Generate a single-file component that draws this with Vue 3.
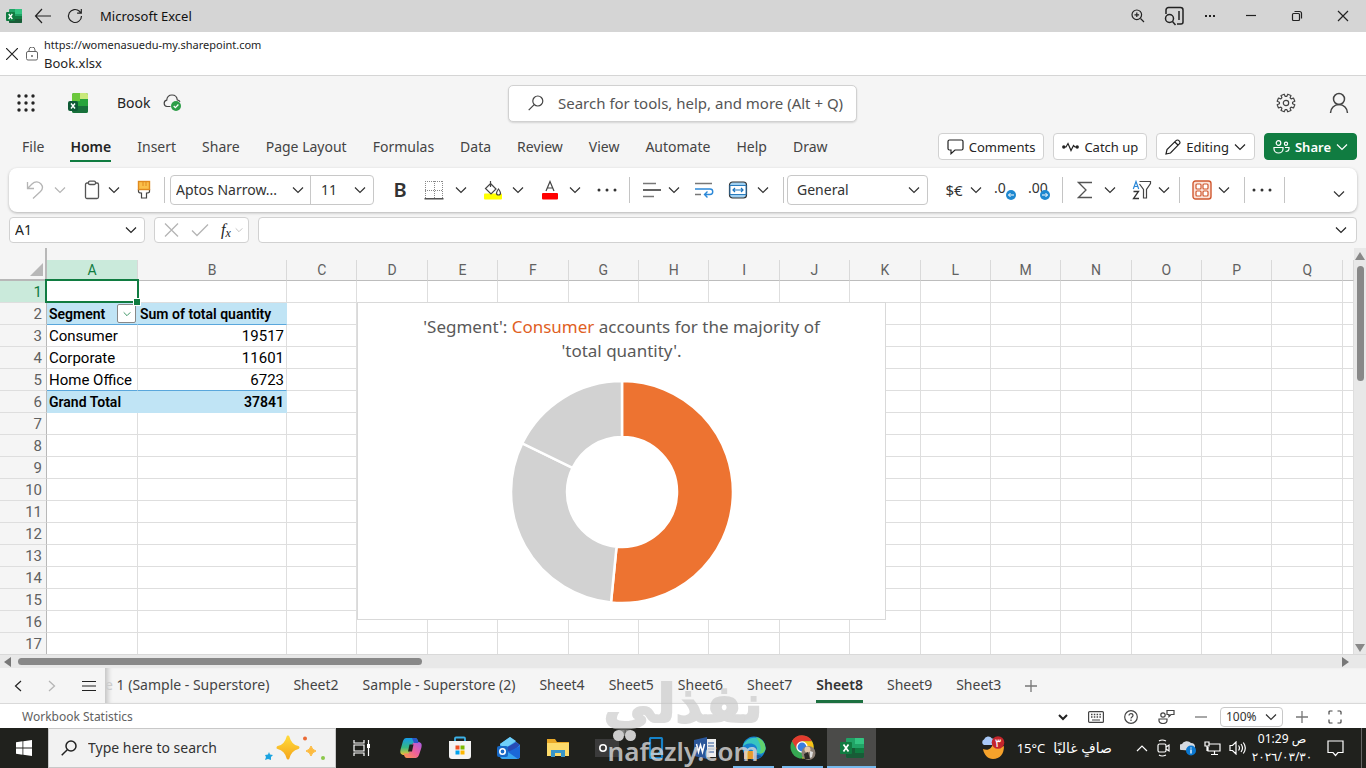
<script setup>
import { h } from 'vue'

const Chev = () =>
  h('svg', { class: 'chev', viewBox: '0 0 12 12', width: 12, height: 12, 'aria-hidden': 'true' }, [
    h('path', { d: 'M1 3.5l5 5 5-5', fill: 'none', stroke: 'currentColor', 'stroke-width': 1.2 })
  ])

const menus = ['File', 'Home', 'Insert', 'Share', 'Page Layout', 'Formulas', 'Data', 'Review', 'View', 'Automate', 'Help', 'Draw']
const columns = 'ABCDEFGHIJKLMNOPQ'.split('')
const cells = {
  2: ['Segment', 'Sum of total quantity'],
  3: ['Consumer', '19517'],
  4: ['Corporate', '11601'],
  5: ['Home Office', '6723'],
  6: ['Grand Total', '37841']
}
const sheets = ['Sheet2', 'Sample - Superstore (2)', 'Sheet4', 'Sheet5', 'Sheet6', 'Sheet7', 'Sheet8', 'Sheet9', 'Sheet3']

const parts = [
  { name: 'Consumer', value: 19517, color: '#ed7331' },
  { name: 'Corporate', value: 11601, color: '#d2d2d2' },
  { name: 'Home Office', value: 6723, color: '#d2d2d2' }
]
const total = parts.reduce((s, p) => s + p.value, 0)
let run = 0
const point = (r, t) => `${(112 + r * Math.sin(t)).toFixed(2)} ${(112 - r * Math.cos(t)).toFixed(2)}`
const slices = parts.map((p) => {
  const a = (run / total) * Math.PI * 2
  run += p.value
  const b = (run / total) * Math.PI * 2
  const big = b - a > Math.PI ? 1 : 0
  return {
    ...p,
    d: `M${point(111, a)}A111 111 0 ${big} 1 ${point(111, b)}L${point(55, b)}A55 55 0 ${big} 0 ${point(55, a)}Z`
  }
})

// Eight-tooth gear outline around (10, 10)
const gear = Array.from({ length: 8 }, (_, i) =>
  [[-16, 6.6], [-11, 9], [11, 9], [16, 6.6]].map(([deg, r]) => {
    const t = ((i * 45 + 22.5 + deg) * Math.PI) / 180
    return `${(10 + r * Math.cos(t)).toFixed(2)},${(10 + r * Math.sin(t)).toFixed(2)}`
  }).join(' ')
).join(' ')
</script>

<template>
  <div class="window">
    <header class="titlebar">
      <svg class="t-logo" width="16" height="16" viewBox="0 0 16 16"><rect x="3" y="1" width="13" height="14" rx="1" fill="#21a366" /><path d="M9 1h6a1 1 0 0 1 1 1v4H9z" fill="#33c481" /><path d="M3 8h13v6a1 1 0 0 1-1 1H4a1 1 0 0 1-1-1z" fill="#185c37" /><path d="M9 8h7v3H9z" fill="#107c41" /><rect y="4" width="9" height="9" rx="1" fill="#107c41" /><path d="M2.700 6l3.600 5M6.300 6l-3.600 5" stroke="#fff" stroke-width="1.300" /></svg>
      <button aria-label="Back" class="back"><svg width="18" height="16" viewBox="0 0 18 16"><path d="M8 1L1.500 8 8 15M1.500 8H17" class="ln" /></svg></button>
      <button aria-label="Reload" class="reload"><svg width="16" height="16" viewBox="0 0 16 16"><path d="M14.500 8A6.500 6.500 0 1 1 12.500 3.300L14 5M14.300 1v4.200h-4.200" class="ln" /></svg></button>
      <span class="title">Microsoft Excel</span>
      <div class="win-tools">
        <button aria-label="Zoom"><svg width="14" height="14" viewBox="0 0 14 14"><circle cx="5.800" cy="5.800" r="4.800" class="ln" /><path d="M9.500 9.500L13 13M3.500 5.800h4.600M5.800 3.500v4.600" class="ln" /></svg></button>
        <button aria-label="Search in sidebar"><svg width="20" height="20" viewBox="0 0 20 20"><path d="M2 8V4a2.500 2.500 0 0 1 2.500-2.500h12A2.500 2.500 0 0 1 19 4v12a2 2 0 0 1-2 2h-4M15 5v9" class="ln w15" /><circle cx="5.500" cy="12.500" r="4" class="ln w15" /><path d="M8.500 15.500l3 3.500" class="ln w15" /></svg></button>
        <button aria-label="More"><svg width="12" height="4" viewBox="0 0 12 4"><path d="M1 1h2v2H1zM5 1h2v2H5zM9 1h2v2H9z" fill="#222" /></svg></button>
        <button aria-label="Minimize"><svg width="12" height="12" viewBox="0 0 12 12"><path d="M1 5.500h10" class="ln" /></svg></button>
        <button aria-label="Restore"><svg width="12" height="12" viewBox="0 0 12 12"><rect x="1.500" y="3.500" width="7" height="7" rx="1" class="ln" /><path d="M3.500 1.500h5a2 2 0 0 1 2 2v5" class="ln" /></svg></button>
        <button aria-label="Close"><svg width="12" height="12" viewBox="0 0 12 12"><path d="M1 1l10 10M11 1L1 11" class="ln" /></svg></button>
      </div>
    </header>

    <div class="address">
      <button aria-label="Close page"><svg width="12" height="12" viewBox="0 0 12 12"><path d="M0 0l12 12M12 0L0 12" class="ln" /></svg></button>
      <svg class="lock" width="12" height="14" viewBox="0 0 12 14"><g fill="none" stroke="#666"><rect x=".5" y="4.500" width="11" height="8.500" rx="1.500" /><path d="M3 4.500V3a3 3 0 0 1 6 0v1.500" /></g><circle cx="6" cy="9" r=".9" fill="#555" /></svg>
      <div class="url"><div>https://womenasuedu-my.sharepoint.com</div><div class="file">Book.xlsx</div></div>
    </div>

    <div class="suite">
      <div class="suite-left">
        <button aria-label="App launcher"><svg width="20" height="18" viewBox="0 0 20 18" fill="#242424"><g v-for="y in 3" :key="y"><circle v-for="x in 3" :key="x" :cx="x * 7 - 4" :cy="y * 7 - 5" r="1.700" /></g></svg></button>
        <svg class="x-logo" width="20" height="20" viewBox="0 0 20 20"><rect x="4" width="16" height="20" rx="2" fill="#27a43c" /><path d="M4 2a2 2 0 0 1 2-2h6v8H4z" fill="#6cc83c" /><path d="M12 0h6a2 2 0 0 1 2 2v4h-8z" fill="#c9e97a" /><path d="M4 13h16v5a2 2 0 0 1-2 2H6a2 2 0 0 1-2-2z" fill="#17703a" /><rect y="8" width="10" height="10" rx="2" fill="#0e5a35" /><path d="M3 10.500l4 5M7 10.500l-4 5" stroke="#fff" stroke-width="1.400" /></svg>
        <span class="book">Book</span>
        <svg class="cloud" width="19" height="18" viewBox="0 0 19 18"><path d="M7.500 12.500H4a3.200 3.200 0 0 1-.3-6.300C4 3.200 6 1 9 1s5 2 5.300 5A3.200 3.200 0 0 1 17 7.800" fill="none" stroke="#444" stroke-width="1.200" /><circle cx="13" cy="12" r="5" fill="#2e9e48" /><path d="M10.700 12l1.700 1.700 3-3.200" fill="none" stroke="#fff" stroke-width="1.200" /></svg>
      </div>
      <label class="search"><svg width="16" height="16" viewBox="0 0 16 16"><circle cx="9.800" cy="6" r="5" class="ln g" /><path d="M6.200 9.600L.7 15.200" class="ln g" /></svg><input aria-label="Search" placeholder="Search for tools, help, and more (Alt + Q)" /></label>
      <div class="suite-right">
        <button aria-label="Settings"><svg width="20" height="20" viewBox="0 0 20 20"><polygon :points="gear" class="ln g" stroke-linejoin="round" /><circle cx="10" cy="10" r="2.700" class="ln g" /></svg></button>
        <button aria-label="Account"><svg width="20" height="22" viewBox="0 0 20 22"><circle cx="10" cy="7" r="5.500" class="ln g w15" /><path d="M1.500 21a8.500 8.500 0 0 1 17 0" class="ln g w15" /></svg></button>
      </div>
    </div>

    <div class="menu-row">
      <nav class="menus"><a v-for="m in menus" :key="m" href="#" :class="{ on: m === 'Home' }">{{ m }}</a></nav>
      <div class="actions">
        <button><svg width="17" height="16" viewBox="0 0 17 16"><path d="M2.500 1h12A1.500 1.500 0 0 1 16 2.500v7a1.500 1.500 0 0 1-1.500 1.500H8l-4 3.700V11H2.500A1.500 1.500 0 0 1 1 9.500v-7A1.500 1.500 0 0 1 2.500 1z" class="ln" /></svg>Comments</button>
        <button><svg width="17" height="12" viewBox="0 0 17 12"><circle cx="1.800" cy="6" r="1.700" fill="#222" /><circle cx="15.200" cy="6" r="1.700" fill="#222" /><path d="M2 6h2l2-3.500 3 7 2.500-5L13 6h2" class="ln" /></svg>Catch up</button>
        <button><svg width="16" height="16" viewBox="0 0 16 16"><path d="M1 15l1-4.500L11 1.700a2 2 0 0 1 3 0l.3.400a2 2 0 0 1 0 2.800L5.500 14zM9.800 3l3.400 3.300" class="ln" /></svg>Editing<Chev /></button>
        <button class="share"><svg width="17" height="14" viewBox="0 0 17 14"><g fill="none" stroke="#fff" stroke-width="1.200"><circle cx="5.500" cy="3" r="2.300" /><circle cx="13" cy="3.700" r="1.600" /><path d="M1 7.500h9v1.500a4.500 4 0 0 1-9 0zM12 7.500h4v1c0 2-1.500 3-3.500 3" /></g></svg>Share<Chev /></button>
      </div>
    </div>

    <div class="ribbon">
      <button class="ib dim" aria-label="Undo"><svg width="18" height="20" viewBox="0 0 18 20"><path d="M1.500 2v6.500H8M1.500 8.500L6 4c3-3 7-2.500 9 0s1.600 5.500-.5 7.500L7 18.500" class="cl" /></svg></button>
      <button class="cv m3 dim" aria-label="Undo options"><Chev /></button>
      <button class="ib m10" aria-label="Paste"><svg width="16" height="20" viewBox="0 0 16 20"><rect x="1.500" y="3" width="13" height="15.500" rx="1.500" fill="none" stroke="#555" stroke-width="1.300" /><rect x="4.500" y="1.200" width="7" height="3.300" rx="1.300" fill="#fff" stroke="#555" stroke-width="1.300" /></svg></button>
      <button class="cv" aria-label="Paste options"><Chev /></button>
      <button class="ib m8" aria-label="Format painter"><svg width="14" height="20" viewBox="0 0 14 20"><path d="M1.500 9.500h11v2c0 1-1 1.500-3 1.500v5h-5v-5c-2 0-3-.5-3-1.500z" fill="#fff" stroke="#444" stroke-width="1.200" /><rect x="1.500" y="1.500" width="11" height="8" fill="#fbc04a" stroke="#e08a1e" stroke-width="1.400" /><path d="M6 2v4M9 2v4" stroke="#e08a1e" /></svg></button>
      <i class="sep m8"></i>
      <div class="fontbox m5">
        <label class="pick fname"><select aria-label="Font"><option>Aptos Narrow...</option></select><Chev /></label>
        <label class="pick fsize"><select aria-label="Font size"><option>11</option></select><Chev /></label>
      </div>
      <button class="ib m14 bold" aria-label="Bold">B</button>
      <button class="ib m10" aria-label="Borders"><svg width="20" height="20" viewBox="0 0 20 20"><path d="M1 1.500h18M1 10.500h18M1.500 1v17M10.500 1v17M18.500 1v17" fill="none" stroke="#888" stroke-dasharray="1 1" stroke-width="1" /><path d="M.5 18.800h19" stroke="#333" stroke-width="1.300" /></svg></button>
      <button class="cv m5" aria-label="Border options"><Chev /></button>
      <button class="ib m10" aria-label="Fill color"><svg width="20" height="20" viewBox="0 0 20 20"><rect x="1" y="13.500" width="18" height="6" rx="1" fill="#ff0" /><path d="M7.500 3.500L13 9l-5 5-5.500-5.500zM7.500 1v6" fill="none" stroke="#444" stroke-width="1.200" /><path d="M15.500 9c1.500 2 2 3 2 4a2 2 0 0 1-4 0c0-1 .5-2 2-4z" fill="#fff" stroke="#444" stroke-width="1.200" /></svg></button>
      <button class="cv m3" aria-label="Fill options"><Chev /></button>
      <button class="ib m10" aria-label="Font color"><svg width="18" height="20" viewBox="0 0 18 20"><path d="M5 11L9 1.500 13 11M6.300 8h5.400" fill="none" stroke="#444" stroke-width="1.200" /><rect x="1" y="13" width="16" height="6.500" rx="1" fill="red" /></svg></button>
      <button class="cv m3" aria-label="Font color options"><Chev /></button>
      <button class="ib m10" aria-label="More font options"><svg width="20" height="4" viewBox="0 0 20 4" fill="#333"><circle cx="2" cy="2" r="1.500" /><circle cx="10" cy="2" r="1.500" /><circle cx="18" cy="2" r="1.500" /></svg></button>
      <i class="sep m10"></i>
      <button class="ib m10" aria-label="Align"><svg width="20" height="16" viewBox="0 0 20 16"><path d="M1 1.500h13M1 14.500h11" stroke="#777" stroke-width="1.400" /><path d="M1 8h18" stroke="#222" stroke-width="1.400" /></svg></button>
      <button class="cv" aria-label="Align options"><Chev /></button>
      <button class="ib m8" aria-label="Wrap text"><svg width="20" height="16" viewBox="0 0 20 16"><path d="M1 1.500h17M1 12.500h6" stroke="#777" stroke-width="1.400" /><path d="M1 7h15a2.700 2.700 0 0 1 0 5.500h-5M13.500 9.500l-3 3 3 3" fill="none" stroke="#2b88d8" stroke-width="1.400" /></svg></button>
      <button class="ib m10" aria-label="Merge"><svg width="20" height="18" viewBox="0 0 20 18"><rect x="1.500" y="1" width="17" height="16" rx="3" fill="#9fd0f2" stroke="#333" stroke-width="1.200" /><rect x="2" y="4.500" width="16" height="9" fill="#fff" stroke="#2b7cbd" /><path d="M5 9h10M7 7L5 9l2 2M13 7l2 2-2 2" fill="none" stroke="#1b74bd" stroke-width="1.200" /></svg></button>
      <button class="cv m3" aria-label="Merge options"><Chev /></button>
      <i class="sep m10"></i>
      <label class="pick numfmt m3"><select aria-label="Number format"><option>General</option></select><Chev /></label>
      <button class="ib m14 money" aria-label="Currency">$€</button>
      <button class="cv" aria-label="Currency options"><Chev /></button>
      <button class="ib m8 dec" aria-label="Increase decimal"><span>.0</span><svg width="10" height="10" viewBox="0 0 10 10"><circle cx="5" cy="5" r="5" fill="#1e88d0" /><path d="M8 5H2.500M4.500 3l-2 2 2 2" fill="none" stroke="#fff" /></svg></button>
      <button class="ib m10 dec" aria-label="Decrease decimal"><span>.00</span><svg width="10" height="10" viewBox="0 0 10 10"><circle cx="5" cy="5" r="5" fill="#1e88d0" /><path d="M2 5h5.500M5.500 3l2 2-2 2" fill="none" stroke="#fff" /></svg></button>
      <i class="sep m10"></i>
      <button class="ib m10" aria-label="AutoSum"><svg width="16" height="18" viewBox="0 0 16 18"><path d="M15 1.500H1.500L9 9l-7.500 7.500H15" fill="none" stroke="#555" stroke-width="1.300" /></svg></button>
      <button class="cv m3" aria-label="Sum options"><Chev /></button>
      <button class="ib m10" aria-label="Sort and filter"><svg width="20" height="20" viewBox="0 0 20 20"><path d="M1.300 9L4 1.500 6.700 9M2.200 6.500h3.600" fill="none" stroke="#2b88d8" stroke-width="1.200" /><path d="M1.500 11.500h5l-5 7h5.500" fill="none" stroke="#333" stroke-width="1.300" /><path d="M7.500 1.500h11v2l-4 6v8.500h-3V9.500L7.500 4" fill="none" stroke="#444" stroke-width="1.200" /></svg></button>
      <button class="cv" aria-label="Sort options"><Chev /></button>
      <i class="sep m5"></i>
      <button class="ib m10" aria-label="Add-ins"><svg width="20" height="20" viewBox="0 0 20 20" fill="#fbe3d9" stroke="#d0582f"><rect x="1" y="1" width="18" height="18" rx="2.500" stroke-width="1.400" /><g fill="#fff" stroke-width="1.200"><rect x="4" y="4" width="5" height="5" rx="1" /><rect x="11" y="4" width="5" height="5" rx="1" /><rect x="4" y="11" width="5" height="5" rx="1" /><rect x="11" y="11" width="5" height="5" rx="1" /></g></svg></button>
      <button class="cv" aria-label="Add-in options"><Chev /></button>
      <i class="sep m10"></i>
      <button class="ib m5" aria-label="More options"><svg width="20" height="4" viewBox="0 0 20 4" fill="#333"><circle cx="2" cy="2" r="1.500" /><circle cx="10" cy="2" r="1.500" /><circle cx="18" cy="2" r="1.500" /></svg></button>
      <i class="sep m10"></i>
      <button class="cv collapse" aria-label="Ribbon display"><Chev /></button>
    </div>

    <div class="formula">
      <label class="namebox"><input aria-label="Name box" value="A1" /><Chev /></label>
      <div class="fx">
        <button class="dim" aria-label="Cancel"><svg width="15" height="14" viewBox="0 0 15 14"><path d="M1 .5l13 13M14 .5L1 13.500" class="cl" /></svg></button>
        <button class="dim" aria-label="Enter"><svg width="18" height="14" viewBox="0 0 18 14"><path d="M1 7.500l5 5L17 1.500" class="cl" /></svg></button>
        <button class="fxb" aria-label="Insert function"><em>f<sub>x</sub></em></button>
        <span class="tiny dim"><Chev /></span>
      </div>
      <label class="fbar"><input aria-label="Formula bar" /><Chev /></label>
    </div>

    <div class="work">
      <main class="sheet">
        <div class="edge"></div>
        <table>
          <colgroup><col class="c-h" /><col class="c-a" /><col class="c-b" /><col v-for="n in 15" :key="n" /><col class="c-end" /></colgroup>
          <thead><tr><th class="corner"><svg width="13" height="13" viewBox="0 0 13 13"><path d="M13 0v13H0z" fill="#b8b8b8" /></svg></th><th v-for="c in columns" :key="c" :class="{ on: c === 'A' }">{{ c }}</th><th></th></tr></thead>
          <tbody>
            <tr v-for="r in 17" :key="r" :class="{ band: r === 2 || r === 6, under: r === 2 || r === 5 }">
              <th :class="{ on: r === 1 }">{{ r }}</th>
              <td :class="{ sel: r === 1, 'has-filter': r === 2 }"><div v-if="r === 2" class="filter-cell"><span>Segment</span><button aria-label="Filter Segment"><Chev /></button></div><template v-else>{{ cells[r] ? cells[r][0] : '' }}</template></td>
              <td :class="{ num: r > 2 }">{{ cells[r] ? cells[r][1] : '' }}</td>
              <td v-for="n in 16" :key="n"></td>
            </tr>
          </tbody>
        </table>
        <figure class="chart">
          <figcaption>'Segment': <b>Consumer</b> accounts for the majority of<br />'total quantity'.</figcaption>
          <svg width="224" height="224" viewBox="0 0 224 224"><path v-for="s in slices" :key="s.name" :d="s.d" :fill="s.color" stroke="#fff" stroke-width="2.500" /></svg>
        </figure>
      </main>
      <div class="vbar"><svg width="10" height="8" viewBox="0 0 10 8"><path d="M5 0l5 8H0z" fill="#888" /></svg><i></i><svg class="dn" width="10" height="8" viewBox="0 0 10 8"><path d="M5 8L0 0h10z" fill="#888" /></svg></div>
    </div>
    <div class="hbar"><svg width="7" height="10" viewBox="0 0 7 10"><path d="M0 5l7-5v10z" fill="#777" /></svg><i></i><svg class="rt" width="7" height="10" viewBox="0 0 7 10"><path d="M7 5L0 0v10z" fill="#777" /></svg></div>

    <div class="tabs-row">
      <div class="tab-nav">
        <button aria-label="Previous sheet"><svg width="8" height="12" viewBox="0 0 8 12"><path d="M7 1L1.500 6 7 11" class="ln" /></svg></button>
        <button class="dim" aria-label="Next sheet"><svg width="8" height="12" viewBox="0 0 8 12"><path d="M1 1l5.500 5L1 11" class="cl" /></svg></button>
        <button aria-label="All sheets"><svg width="14" height="12" viewBox="0 0 14 12"><path d="M0 1.500h14M0 6h14M0 10.500h14" class="ln" /></svg></button>
      </div>
      <nav class="tabs"><a href="#"><span class="fade">e</span> 1 (Sample - Superstore)</a><a v-for="s in sheets" :key="s" href="#" :class="{ on: s === 'Sheet8' }">{{ s }}</a><button aria-label="Add sheet"><svg width="12" height="12" viewBox="0 0 12 12"><path d="M6 0v12M0 6h12" stroke="#777" stroke-width="1.300" /></svg></button></nav>
    </div>

    <footer class="status">
      <span>Workbook Statistics</span>
      <div class="st-tools">
        <button aria-label="More status"><svg width="10" height="10" viewBox="0 0 10 10"><path d="M1 3l4 4 4-4" class="ln w2" /></svg></button>
        <button aria-label="Keyboard"><svg width="16" height="12" viewBox="0 0 16 12"><rect x=".6" y=".6" width="14.800" height="10.800" rx="1" class="ln g" /><path d="M3 3.500h10M3 6h10" stroke="#444" stroke-width="1.300" stroke-dasharray="1.500 1.300" /><path d="M4 9h8" stroke="#444" /></svg></button>
        <button aria-label="Help"><svg width="14" height="14" viewBox="0 0 14 14"><circle cx="7" cy="7" r="6.300" class="ln g" /><path d="M5 5.500C5 3 9 3 9 5.500 9 7 7 7 7 8.500M7 9.500V11" class="ln g" /></svg></button>
        <button aria-label="Feedback"><svg width="17" height="15" viewBox="0 0 17 15"><circle cx="5" cy="6" r="2.200" class="ln g" /><path d="M1 10h8v1.500a4 3 0 0 1-8 0zM9 1.500h7v4h-3l-2 2v-2H9z" class="ln g" /></svg></button>
        <button aria-label="Zoom out"><svg width="12" height="12" viewBox="0 0 12 12"><path d="M0 6h12" stroke="#777" stroke-width="1.300" /></svg></button>
        <label class="pick zoom"><select aria-label="Zoom level"><option>100%</option></select><Chev /></label>
        <button aria-label="Zoom in"><svg width="12" height="12" viewBox="0 0 12 12"><path d="M6 0v12M0 6h12" stroke="#777" stroke-width="1.300" /></svg></button>
        <button aria-label="Full screen"><svg width="14" height="14" viewBox="0 0 14 14"><path d="M1 4.500V2a1 1 0 0 1 1-1h2.500M9.500 1H12a1 1 0 0 1 1 1v2.500M13 9.500V12a1 1 0 0 1-1 1H9.500M4.500 13H2a1 1 0 0 1-1-1V9.500" class="ln g" /></svg></button>
      </div>
    </footer>

    <div class="taskbar">
      <button class="start" aria-label="Start"><svg width="16" height="16" viewBox="0 0 16 16" fill="#fff"><path d="M0 2.200L6.500 1.300V7.600H0zM7.300 1.200L16 0v7.600H7.300zM0 8.400h6.500v6.300L0 13.800zM7.300 8.400H16V16l-8.700-1.200z" /></svg></button>
      <label class="tsearch"><svg width="16" height="16" viewBox="0 0 16 16"><circle cx="10" cy="6" r="5" class="ln w15" /><path d="M6.300 9.700L.7 15.300" class="ln w15" /></svg><input aria-label="Type here to search" placeholder="Type here to search" />
        <svg class="spark" width="62" height="26" viewBox="0 0 62 26"><defs><linearGradient id="star" x2="0" y2="1"><stop stop-color="#ffd83a" /><stop offset="1" stop-color="#f5a81c" /></linearGradient></defs><path d="M24 2q2 8.500 10 10.500Q26 14.500 24 23q-2-8.500-10-10.500Q22 10.500 24 2z" fill="url(#star)" stroke="url(#star)" stroke-width="3" stroke-linejoin="round" /><path d="M47 11q1 4 5 5-4 1-5 5-1-4-5-5 4-1 5-5z" fill="#fdbb3f" stroke="#fdbb3f" stroke-linejoin="round" /><path d="M5 17l1 2.500 3 .5-2 2v3l-3-1-3 1 1-3-1-2 3-.5z" fill="#1ba3e0" /><circle cx="41" cy="3.500" r="2" fill="#ea6a35" /><circle cx="59" cy="23" r="2" fill="#8cc84b" /></svg></label>
      <div class="apps">
        <button aria-label="Task view"><svg width="18" height="16" viewBox="0 0 18 16"><path d="M1 0v3h10V0M1 16v-3h10v3M1 5h10v6H1zM15.500 0v16" fill="none" stroke="#fff" stroke-width="1.200" /><rect x="14" y="4" width="3" height="4" fill="#fff" /></svg></button>
        <button aria-label="Copilot"><svg width="24" height="24" viewBox="0 0 24 24"><defs><linearGradient id="cpa" x2="0" y2="1"><stop stop-color="#169bea" /><stop offset=".55" stop-color="#34b884" /><stop offset="1" stop-color="#f3c733" /></linearGradient><linearGradient id="cpb" x1="1" x2="0" y2="1"><stop stop-color="#a45ce8" /><stop offset=".5" stop-color="#f0609a" /><stop offset="1" stop-color="#fb9b46" /></linearGradient></defs><path d="M7 2h9c2 0 2.500 1.500 3 3l.5 2H14l-3 9q-1 3-4 3H4C1 18 1 16 1.700 13L4 5q1-3 3-3z" fill="url(#cpa)" /><path d="M17 22H8c-2 0-2.500-1.500-3-3l-.5-1.500H10l3-9q1-2.500 4-2.500h3c3 1 3 3 2.300 6L20 19q-1 3-3 3z" fill="url(#cpb)" /><path d="M10.500 8.500h4L13 15.500H9z" fill="#20221f" /><path d="M13 2h3c2 0 2.500 1.500 3 3l.5 2H15z" fill="#2c55c8" /></svg></button>
        <button aria-label="Store"><svg width="24" height="24" viewBox="0 0 24 24"><path d="M7 7V2.500Q7 1.500 8 1.500h8q1 0 1 1V7" fill="none" stroke="#3cb2e8" stroke-width="1.800" /><path d="M1 5h22v15a3 3 0 0 1-3 3H4a3 3 0 0 1-3-3z" fill="#f4f4f4" /><path d="M7.500 9.500h4v4h-4z" fill="#f05022" /><path d="M12.500 9.500h4v4h-4z" fill="#7cb900" /><path d="M7.500 14.500h4v4h-4z" fill="#00a3ee" /><path d="M12.500 14.500h4v4h-4z" fill="#feb800" /></svg></button>
        <button aria-label="Outlook"><svg width="24" height="24" viewBox="0 0 24 24"><path d="M3 8l10-7 10 8v11a3 3 0 0 1-3 3H5a3 3 0 0 1-2-3z" fill="#38a5f0" /><path d="M3 8l10-7 6 4-12 8z" fill="#6fd0fa" /><path d="M7 13l12-7 4 3-9 8z" fill="#274bb5" /><path d="M23 10v11l-2 2-10-7z" fill="#1b67d8" /><rect y="10" width="11" height="11" rx="2" fill="#1769c7" /><circle cx="5.500" cy="15.500" r="2.700" fill="none" stroke="#fff" stroke-width="1.600" /></svg></button>
        <button aria-label="File Explorer"><svg width="22" height="20" viewBox="0 0 22 20"><path d="M0 1h8l2 3h12v14H0z" fill="#e9a928" /><path d="M0 5h22v13H0z" fill="#fddb6b" /><path d="M4 19v-7h14v7h-4v-4H8v4z" fill="#3a96c8" /></svg></button>
        <button aria-label="Camera"><svg width="24" height="18" viewBox="0 0 24 18"><rect width="24" height="18" fill="#3b3b3b" /><circle cx="8" cy="9" r="3.200" fill="none" stroke="#fff" stroke-width="1.600" /></svg></button>
        <button aria-label="Your Phone"><svg width="16" height="22" viewBox="0 0 16 22"><rect x="2" y="1" width="12" height="20" rx="1" fill="none" stroke="#1683c9" stroke-width="2.200" /><path d="M2 17h8l4-4" stroke="#1683c9" stroke-width="2" fill="none" /></svg></button>
        <button aria-label="Word"><svg width="22" height="22" viewBox="0 0 22 22"><path d="M9 2h13v18H9z" fill="#eee" /><path d="M14 6h6M14 9h6M14 12h6M14 15h6" stroke="#2b579a" /><path d="M0 3l13-3v22L0 19z" fill="#2b579a" /><path d="M2.500 7l2 8 2-7 2 7 2-8" fill="none" stroke="#fff" stroke-width="1.500" /></svg></button>
        <button aria-label="Edge" class="open"><svg width="24" height="24" viewBox="0 0 24 24"><circle cx="12" cy="12" r="11.500" fill="#1681cf" /><path d="M1 10A11.500 11.500 0 0 1 23.500 12c0 4-3 5.500-6 5.500s-4-1-3-2.500c2-4-2-8-7-7.500-3 .2-5 1.500-6.500 3z" fill="#39c5c0" /><path d="M14 1a11.500 11.500 0 0 1 9.500 11c0 4-3 5.500-6 5.500 3-5 0-12-3.500-16.500z" fill="#62d36d" /><path d="M2 17q5 4 14 2l4 1A11.500 11.500 0 0 1 2 17z" fill="#12559b" /><path d="M2 15h10v8H2z" fill="#e59b2c" /></svg></button>
        <button aria-label="Chrome" class="open"><svg width="26" height="26" viewBox="0 0 26 26"><circle cx="12" cy="12" r="11.500" fill="#36a852" /><path d="M2 6A11.500 11.500 0 0 1 22 6.200H12L7 15z" fill="#e33b2e" /><path d="M22 6.200A11.500 11.500 0 0 1 12 23.500l5-9.500-5-7.800z" fill="#fbc116" /><circle cx="12" cy="12" r="5.700" fill="#fff" /><circle cx="12" cy="12" r="4.400" fill="#3a7de0" /><circle cx="18.500" cy="18" r="7" fill="#8c8075" /><circle cx="17.500" cy="14.500" r="3" fill="#e3c9ae" /><path d="M14 19l4-2 2 7h-5z" fill="#2d2826" /><path d="M20 16l3 1-1 5-2 1z" fill="#ddd" /></svg></button>
        <button aria-label="Excel" class="open cur"><svg width="24" height="22" viewBox="0 0 24 22"><rect x="6" y="1" width="18" height="20" rx="1" fill="#21a366" /><path d="M15 1h8a1 1 0 0 1 1 1v5h-9z" fill="#33c481" /><path d="M6 11h18v9a1 1 0 0 1-1 1H7a1 1 0 0 1-1-1z" fill="#185c37" /><path d="M15 11h9v5h-9z" fill="#107c41" /><rect y="5" width="12" height="12" rx="1" fill="#107c41" /><path d="M3.500 7.500l5 7M8.500 7.500l-5 7" stroke="#fff" stroke-width="1.700" /></svg></button>
      </div>
      <div class="tray">
        <svg class="wx" width="25" height="24" viewBox="0 0 25 24"><path d="M3 13c5 2 9 0 10-6 5 4 9 4 11 3 0 8-4 13-11 13-5 0-9-4-10-10z" fill="#f6a22b" /><path d="M4 9a3 3 0 0 1 0-5.500 4.500 4.500 0 0 1 8-1A3.500 3.500 0 0 1 14 9z" fill="#a9c8f7" /><circle cx="18" cy="6.500" r="6.300" fill="#c4252b" /><text x="18" y="11" fill="#fff" font-size="12" text-anchor="middle">٣</text></svg>
        <span class="temp">15°C</span><span class="ar" dir="rtl">صافٍ غالبًا</span>
        <button aria-label="Hidden icons" class="up"><svg width="12" height="8" viewBox="0 0 12 8"><path d="M1 7l5-5 5 5" class="wl" /></svg></button>
        <svg width="16" height="18" viewBox="0 0 16 18"><rect x="2" y="5" width="8" height="8" rx="1.500" class="wl" /><path d="M10 8l3-2v6l-3-2M3 2q3-2 7 0M3 16q3 2 7 0" class="wl" /></svg>
        <svg width="16" height="16" viewBox="0 0 16 16"><path d="M2 10a3 3 0 0 1 0-6 5 4 0 0 1 9-1q4 0 4 4v4z" fill="#d5dae0" /><circle cx="11" cy="10.500" r="5" fill="#0a78d1" /><path d="M11 7.500v1M11 9.500v4" stroke="#fff" stroke-width="1.300" /></svg>
        <svg width="17" height="15" viewBox="0 0 17 15"><path d="M5 3h11v7H4V6M7 13.500h7M10.500 10v3.500M1 1h4v4H1zM3 5v5" class="wl" /></svg>
        <svg width="17" height="14" viewBox="0 0 17 14"><path d="M1 4.500h2.500L7 1v12L3.500 9.500H1zM9.500 4.500q2 2.500 0 5M12 3q3 4 0 8M14.300 1.500q4 5.500 0 11" class="wl" /></svg>
        <div class="clock"><span>01:29 ص</span><span>٢٠٢٦/٠٣/٣٠</span></div>
        <button aria-label="Notifications" class="note"><svg width="17" height="17" viewBox="0 0 17 17"><path d="M1 1h15v11.500h-5L8.500 15.500 6 12.500H1z" class="wl" /></svg></button>
      </div>
    </div>

    <div class="mark" aria-hidden="true"><span class="mark-ar">نفذلي</span><span class="mark-dots"><i></i><i></i></span><span class="mark-en">nafezly.com</span></div>
  </div>
</template>

<style>
body { margin: 0; overflow: hidden; }
</style>

<style scoped>
* { box-sizing: border-box; }
.window { position: relative; display: flex; flex-direction: column; height: 100vh; background: #f5f5f5; color: #242424; font: 14px/20px "Noto Sans", "DejaVu Sans", sans-serif; }
button { border: 0; background: none; padding: 0; font: inherit; color: inherit; display: flex; align-items: center; justify-content: center; }
a { color: inherit; text-decoration: none; }
input, select { font: inherit; color: inherit; border: 0; background: none; outline: 0; padding: 0; min-width: 0; appearance: none; }
svg { flex: none; display: block; }
.ln { fill: none; stroke: #222; stroke-width: 1.2; }
.ln.g { stroke: #444; }
.w15 { stroke-width: 1.5; }
.w2 { stroke-width: 2; }
.cl { fill: none; stroke: currentColor; stroke-width: 1.3; }
.wl { fill: none; stroke: #fff; stroke-width: 1.2; }
.dim { color: #b5b5b5; }

.titlebar { flex: none; display: flex; align-items: center; height: 32px; background: #d5d5d5; padding-left: 6px; font-size: 13px; color: #111; }
.back { margin-left: 12px; }
.reload { margin-left: 15px; }
.title { margin-left: 17px; }
.win-tools { margin-left: auto; display: flex; align-items: center; }
.win-tools button { width: 46px; height: 32px; }
.win-tools button:nth-child(-n+3) { width: 36px; }

.address { flex: none; display: flex; align-items: center; height: 44px; background: #fff; border-bottom: 1px solid #d5d5d5; padding-left: 6px; font-size: 11px; line-height: 18px; }
.lock { margin-left: 8px; }
.url { margin-left: 6px; }
.file { font-size: 13px; }

.suite { flex: none; display: grid; grid-template-columns: 1fr 349px 1fr; align-items: center; height: 54px; padding: 0 17px 0 16px; }
.suite-left, .suite-right { display: flex; align-items: center; }
.x-logo { margin-left: 32px; }
.book { margin-left: 29px; }
.cloud { margin-left: 12px; }
.search { display: flex; align-items: center; gap: 14px; height: 37px; padding: 0 5px 0 19px; background: #fff; border: 1px solid #d1d1d1; border-radius: 5px; box-shadow: 0 1px 2px #0002; font-size: 15px; }
.search input { flex: 1; }
.search input::placeholder { color: #555; opacity: 1; }
.suite-right { justify-content: flex-end; gap: 33px; }

.menu-row { flex: none; display: flex; align-items: center; justify-content: space-between; height: 33px; padding: 0 9px 0 22px; }
.menus { display: flex; gap: 26px; color: #444; }
.menus a { height: 30px; line-height: 29px; }
.menus .on { font-weight: 600; color: #242424; border-bottom: 2px solid #107c41; }
.actions { display: flex; gap: 9px; font-size: 13px; }
.actions button { height: 27px; padding: 0 8px; gap: 5px; background: #fff; border: 1px solid #d1d1d1; border-radius: 4px; white-space: nowrap; }
.actions .share { background: #107c41; border-color: #107c41; color: #fff; font-weight: 600; }

.ribbon { flex: none; display: flex; align-items: center; height: 44px; margin: 5px 9px 0; padding-left: 14px; background: #fff; border-radius: 8px; box-shadow: 0 1px 3px #0004; color: #333; }
.ib { width: 24px; height: 30px; flex: none; }
.cv { width: 20px; height: 30px; flex: none; }
.m3 { margin-left: 3px; }
.m5 { margin-left: 5px; }
.m8 { margin-left: 8px; }
.m10 { margin-left: 10px; }
.m14 { margin-left: 14px; }
.sep { width: 1px; height: 26px; background: #c4c4c4; flex: none; }
.bold { font-size: 20px; font-weight: 600; }
.money { font-size: 15px; }
.dec { display: block; position: relative; font-size: 14px; text-align: left; }
.dec svg { position: absolute; right: 2px; bottom: 5px; }
.dec span { display: block; line-height: 14px; padding-bottom: 4px; }
.fontbox { display: flex; width: 204px; height: 30px; border: 1px solid #c8c8c8; border-radius: 4px; }
.pick { display: flex; align-items: center; }
.pick select { flex: 1; }
.fname { width: 140px; padding: 0 6px 0 5px; border-right: 1px solid #c8c8c8; }
.fsize { flex: 1; padding: 0 7px 0 10px; }
.numfmt { width: 141px; height: 30px; padding: 0 7px 0 9px; border: 1px solid #c8c8c8; border-radius: 4px; }
.collapse { margin-left: auto; margin-right: 8px; padding-top: 8px; }

.formula { flex: none; display: flex; gap: 9px; height: 36px; padding: 5px 9px; }
.formula > * { display: flex; align-items: center; background: #fff; border: 1px solid #d1d1d1; border-radius: 4px; }
.namebox { width: 136px; padding: 0 7px 0 5px; }
.namebox input { flex: 1; }
.fx { width: 95px; padding-left: 9px; gap: 12px; }
.fxb { font: italic 16px/20px "Liberation Serif", serif; }
.fxb sub { font-size: 12px; vertical-align: -2px; line-height: 0; }
.tiny { margin-left: -8px; }
.tiny .chev { width: 8px; height: 8px; }
.fbar { flex: 1; padding: 0 9px; }
.fbar input { flex: 1; }

.work { flex: 1; min-height: 0; display: flex; }
.sheet { flex: 1; min-width: 0; position: relative; overflow: hidden; font-family: Roboto, sans-serif; }
.edge { width: 47px; height: 12px; border-right: 2px solid #b8b8b8; }
table { width: 100%; table-layout: fixed; border-collapse: separate; border-spacing: 0; }
.c-h { width: 47px; }
.c-a { width: 91px; }
.c-b { width: 149px; }
.c-end { width: 11px; }
th, td { padding: 0; overflow: hidden; white-space: nowrap; height: 22px; line-height: 19px; }
thead th { height: 21px; line-height: 20px; font-weight: 400; color: #616161; border-right: 1px solid #d9d9d9; border-bottom: 1px solid #bdbdbd; }
thead .on { background: #caeadb; color: #107c41; }
.corner { border-right: 2px solid #b8b8b8; border-bottom: 2px solid #b8b8b8; }
.corner svg { margin-left: 30px; }
tbody th { font-weight: 400; text-align: right; padding: 2px 4px 0 0; font-size: 15px; color: #616161; background: #f5f5f5; border-right: 1px solid #b8b8b8; border-bottom: 1px solid #dedede; }
tbody .on { background: #caeadb; color: #107c41; }
td { background: #fff; border-right: 1px solid #dedede; border-bottom: 1px solid #dedede; color: #000; font-size: 15px; padding: 2px 0 0 2px; }
.num { text-align: right; padding-right: 2px; }
.band td:nth-child(-n+3) { background: #c0e4f5; border-color: #c0e4f5; font-weight: 600; font-size: 14px; }
.under td:nth-child(-n+3) { border-bottom-color: #5aa7dc; }
.sel { position: relative; overflow: visible; }
.sel::before { content: ""; position: absolute; inset: -2px -2px -1px -2px; border: 2px solid #107c41; z-index: 1; }
.sel::after { content: ""; position: absolute; right: -4px; bottom: -4px; width: 6px; height: 6px; background: #107c41; border: 1px solid #fff; z-index: 2; }
.has-filter { padding-top: 0; }
.filter-cell { display: flex; align-items: center; justify-content: space-between; padding-right: 1px; height: 21px; }
.filter-cell span { padding-top: 2px; }
.filter-cell button { width: 19px; height: 19px; border: 1px solid #888; border-radius: 2px; background: #fff; color: #107c41; }
.filter-cell .chev { width: 8px; height: 8px; }
.chart { position: absolute; left: 357px; top: 54px; width: 529px; height: 318px; margin: 0; background: #fff; border: 1px solid #d9d9d9; display: flex; flex-direction: column; align-items: center; padding-top: 12px; }
figcaption { text-align: center; font: 17px/24px "Noto Sans", sans-serif; color: #595959; }
figcaption b { font-weight: 400; color: #e0601f; }
.chart svg { margin-top: 17px; }
.vbar { width: 12px; background: #e8e8e8; display: flex; flex-direction: column; align-items: center; padding: 4px 0 2px; }
.vbar i { width: 7px; height: 115px; margin-top: 6px; border-radius: 4px; background: #888; }
.dn { margin-top: auto; }
.hbar { flex: none; display: flex; align-items: center; height: 14px; background: #e8e8e8; border-top: 1px solid #d9d9d9; padding: 0 17px 0 4px; }
.hbar i { width: 404px; height: 7px; margin-left: 7px; border-radius: 4px; background: #888; }
.rt { margin-left: auto; }

.tabs-row { flex: none; display: flex; height: 35px; }
.tab-nav { flex: none; width: 105px; display: flex; align-items: center; gap: 26px; padding-left: 14px; }
.tabs { flex: 1; display: flex; align-items: center; gap: 24px; overflow: hidden; color: #444; white-space: nowrap; box-shadow: inset 6px 0 5px -3px #0003; }
.tabs a { height: 35px; line-height: 34px; }
.tabs .on { font-weight: 600; border-bottom: 3px solid #1c7040; color: #333; }
.fade { color: #ccc; }

.status { flex: none; display: flex; align-items: center; justify-content: space-between; height: 25px; background: #fff; border-top: 1px solid #d9d9d9; padding: 1px 24px 0 22px; font-size: 12px; color: #616161; }
.st-tools { display: flex; align-items: center; gap: 20px; }
.zoom { width: 63px; height: 20px; margin: 0 -7px; padding: 0 5px; border: 1px solid #c8c8c8; border-radius: 4px; color: #333; }

.taskbar { flex: none; display: flex; height: 40px; background: #20211d; color: #fff; }
.start { width: 48px; }
.tsearch { width: 288px; display: flex; align-items: center; gap: 11px; padding: 0 9px 0 12px; background: #f2f2f2; border: 1px solid #c8c8c8; color: #333; }
.tsearch input { flex: 1; }
.tsearch input::placeholder { color: #333; opacity: 1; }
.apps { display: flex; padding-left: 1px; }
.apps button { width: 49px; height: 40px; position: relative; }
.apps .cur { background: #4b4b49; }
.open::after { content: ""; position: absolute; left: 4px; right: 4px; bottom: 0; height: 2px; background: #76b9ed; }
.cur::after { left: 0; right: 0; }
.tray { margin-left: auto; display: flex; align-items: center; gap: 8px; padding-right: 4px; font-size: 13px; }
.wx { margin-right: 4px; }
.ar { font-size: 14px; }
.up { margin-left: 16px; }
.clock { display: flex; flex-direction: column; align-items: center; font-size: 12px; line-height: 18px; width: 56px; margin-right: -8px; white-space: nowrap; }
.note { width: 52px; height: 40px; border-right: 1px solid #666; }

.mark { position: absolute; left: 600px; bottom: 0; width: 166px; height: 86px; pointer-events: none; text-align: center; }
.mark span { position: absolute; left: 0; right: 0; }
.mark-ar { top: -8px; font: bold 52px/60px "DejaVu Sans", sans-serif; color: #c4c4c4; -webkit-text-stroke: 2px #c4c4c4; opacity: 0.6; }
.mark-en { bottom: 0; font: 600 26px/34px "Noto Sans", sans-serif; color: #dddc; }
.mark-dots { top: 48px; display: flex; gap: 1px; padding-left: 13px; }
.mark-dots i { width: 11px; height: 11px; border-radius: 50%; background: #ccc; }
</style>
